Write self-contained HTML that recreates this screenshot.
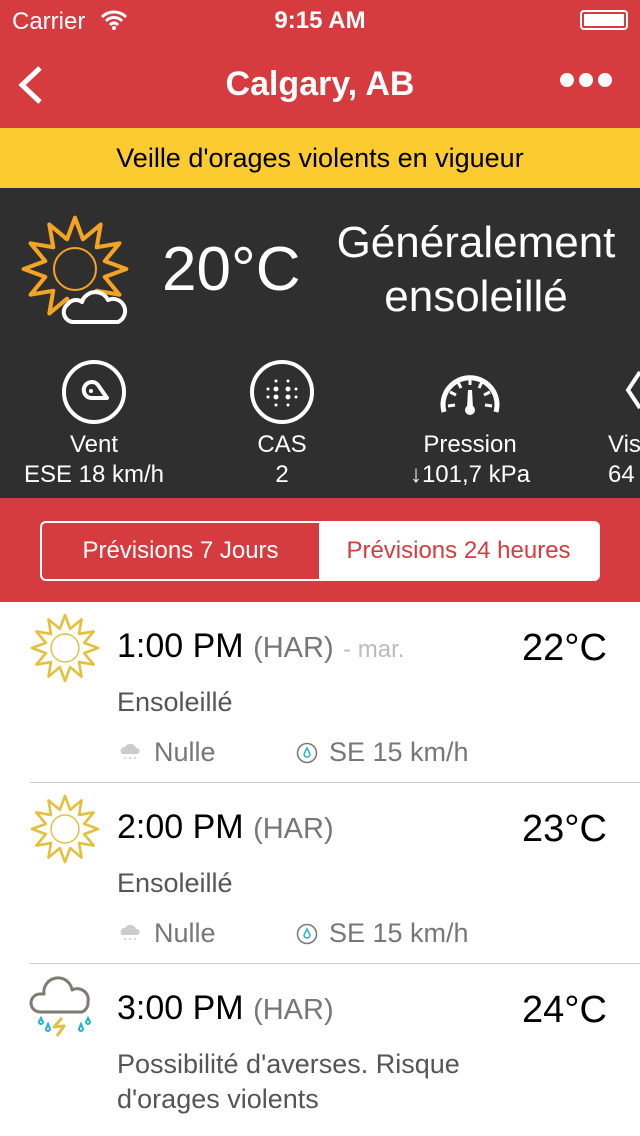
<!DOCTYPE html>
<html><head><meta charset="utf-8"><style>
*{margin:0;padding:0;box-sizing:border-box}
body{width:640px;height:1136px;overflow:hidden;font-family:"Liberation Sans",sans-serif;background:#fff;position:relative}
.a{position:absolute;white-space:nowrap}
</style></head><body>
<svg width="0" height="0" style="position:absolute"><defs>
<symbol id="star" viewBox="-1.15 -1.15 2.3 2.3"><polygon points="0,-1 .155,-.58 .5,-.866 .424,-.424 .866,-.5 .58,-.155 1,0 .58,.155 .866,.5 .424,.424 .5,.866 .155,.58 0,1 -.155,.58 -.5,.866 -.424,.424 -.866,.5 -.58,.155 -1,0 -.58,-.155 -.866,-.5 -.424,-.424 -.5,-.866 -.155,-.58" fill="none" stroke="currentColor" stroke-width=".08" stroke-linejoin="round"/></symbol>
</defs></svg>
<div class="a" style="left:0;top:0;width:640px;height:128px;background:#d63c3f"></div>
<div class="a" style="left:12px;top:8px;color:#fff;font-size:24px">Carrier</div>
<svg class="a" style="left:100px;top:9px" width="28" height="22" viewBox="0 0 28 22"><path d="M2 8a17 17 0 0 1 24 0M6 12a11 11 0 0 1 16 0M10 16a5 5 0 0 1 8 0" stroke="#fff" stroke-width="3" fill="none"/><circle cx="14" cy="19" r="2" fill="#fff"/></svg>
<div class="a" style="left:0;width:640px;top:7px;text-align:center;color:#fff;font-size:24px;font-weight:bold">9:15 AM</div>
<div class="a" style="left:580px;top:10px;width:48px;height:20px;border:2px solid #fff;border-radius:4px;padding:2px"><div style="background:#fff;height:100%;border-radius:1px"></div></div>
<svg class="a" style="left:14px;top:64px" width="30" height="42"><path d="M26 4 L8 21 L26 38" stroke="#fff" stroke-width="5" fill="none"/></svg>
<div class="a" style="left:0;width:640px;top:65px;text-align:center;color:#fff;font-size:34px;font-weight:bold">Calgary, AB</div>
<div class="a" style="left:560px;top:73px"><span style="display:inline-block;width:14px;height:14px;border-radius:7px;background:#fff;margin-right:5px"></span><span style="display:inline-block;width:14px;height:14px;border-radius:7px;background:#fff;margin-right:5px"></span><span style="display:inline-block;width:14px;height:14px;border-radius:7px;background:#fff"></span></div>
<div class="a" style="left:0;top:128px;width:640px;height:60px;background:#fccb2f;text-align:center;font-size:27px;line-height:60px;color:#000">Veille d'orages violents en vigueur</div>
<div class="a" style="left:0;top:188px;width:640px;height:310px;background:#2f2f2f"></div>
<svg class="a" style="left:16px;top:210px;color:#f4a324" width="118" height="118"><use href="#star" width="118" height="118"/><circle cx="59" cy="59" r="21" fill="none" stroke="#f4a324" stroke-width="2"/></svg>
<svg class="a" style="left:60px;top:288px" width="72" height="38"><path d="M12 34 A10 10 0 0 1 8 16 A10 10 0 0 1 22 14 A14 14 0 0 1 48 12 A11 11 0 0 1 58 34 Z" fill="#2f2f2f" stroke="#fff" stroke-width="4" stroke-linejoin="round"/></svg>
<div class="a" style="left:162px;top:234px;color:#fff;font-size:62px;font-weight:300">20°C</div>
<div class="a" style="left:312px;top:216px;width:328px;text-align:center;color:#fff;font-size:44px;line-height:54px">Généralement<br>ensoleillé</div>
<svg class="a" style="left:60px;top:358px" width="68" height="68"><circle cx="34" cy="34" r="30" fill="none" stroke="#fff" stroke-width="4"/><path d="M47 40 L31 40 A8 8 0 1 1 38 27 Z" fill="none" stroke="#fff" stroke-width="4" stroke-linejoin="round"/><circle cx="31" cy="33" r="2" fill="#fff"/></svg>
<svg class="a" style="left:248px;top:358px" width="68" height="68"><circle cx="34" cy="34" r="30" fill="none" stroke="#fff" stroke-width="4"/><g fill="#fff"><circle cx="28" cy="23" r="1.5"/><circle cx="40" cy="23" r="1.5"/><circle cx="20" cy="31" r="1.5"/><circle cx="28" cy="31" r="2.5"/><circle cx="40" cy="31" r="2.5"/><circle cx="48" cy="31" r="1.5"/><circle cx="20" cy="39" r="1.5"/><circle cx="28" cy="39" r="2.5"/><circle cx="40" cy="39" r="2.5"/><circle cx="48" cy="39" r="1.5"/><circle cx="28" cy="47" r="1.5"/><circle cx="40" cy="47" r="1.5"/></g></svg>
<svg class="a" style="left:436px;top:364px" width="68" height="60"><path d="M8 48 A27 27 0 1 1 60 48" fill="none" stroke="#fff" stroke-width="5"/><g stroke="#fff" stroke-width="3"><path d="M34 14v7M22 18l3 6M46 18l-3 6M14 28l6 3M54 28l-6 3M12 42l7-1M56 42l-7-1"/></g><path d="M32 26 L36 26 L37 44 L31 44 Z" fill="#fff"/><circle cx="34" cy="46" r="5" fill="#fff"/></svg>
<svg class="a" style="left:624px;top:370px" width="20" height="40"><path d="M16 2 L4 20 L16 38" stroke="#fff" stroke-width="4" fill="none"/></svg>
<div class="a" style="left:0;width:188px;top:430px;text-align:center;color:#fff;font-size:24px;line-height:30px">Vent<br>ESE 18 km/h</div>
<div class="a" style="left:182px;width:200px;top:430px;text-align:center;color:#fff;font-size:24px;line-height:30px">CAS<br>2</div>
<div class="a" style="left:370px;width:200px;top:430px;text-align:center;color:#fff;font-size:24px;line-height:30px">Pression<br>↓101,7 kPa</div>
<div class="a" style="left:608px;top:430px;color:#fff;font-size:24px;line-height:30px">Vis<br>64</div>
<div class="a" style="left:0;top:498px;width:640px;height:104px;background:#d63c3f"></div>
<div class="a" style="left:40px;top:521px;width:560px;height:60px;border:2px solid #fff;border-radius:6px;background:#fff;overflow:hidden">
<div style="position:absolute;left:0;top:0;width:277px;height:56px;background:#d63c3f;color:#fff;font-size:24px;line-height:56px;text-align:center">Prévisions 7 Jours</div>
<div style="position:absolute;left:277px;top:0;width:279px;height:56px;color:#d63c3f;font-size:24px;line-height:56px;text-align:center">Prévisions 24 heures</div></div>

<svg class="a" style="left:27px;top:610px;color:#e3c13f" width="76" height="76"><use href="#star" width="76" height="76"/><circle cx="38" cy="38" r="14" fill="none" stroke="#e3c13f" stroke-width="1.5"/></svg>
<div class="a" style="left:117px;top:627px;font-size:34px;color:#000">1:00 PM <span style="color:#777;font-size:29px">(HAR)</span> <span style="color:#bbb;font-size:24px">- mar.</span></div>
<div class="a" style="left:522px;top:627px;font-size:38px;color:#000">22°C</div>
<div class="a" style="left:117px;top:687px;font-size:27px;color:#555">Ensoleillé</div>
<svg class="a" style="left:118px;top:742px" width="24" height="20"><path d="M4 12a4 4 0 0 1 3-7a6 6 0 0 1 11 1a3 3 0 0 1 1 6z" fill="#ccc"/><g fill="#ccc"><circle cx="7" cy="16" r="1"/><circle cx="12" cy="16" r="1"/><circle cx="17" cy="16" r="1"/></g></svg>
<div class="a" style="left:154px;top:737px;font-size:27px;color:#777">Nulle</div>
<svg class="a" style="left:295px;top:741px" width="24" height="24"><circle cx="12" cy="12" r="9.5" fill="none" stroke="#777" stroke-width="1.5"/><path d="M12 7 L15 13 A3 3 0 1 1 9 13Z" fill="none" stroke="#1fb4c8" stroke-width="1.5"/></svg>
<div class="a" style="left:329px;top:737px;font-size:27px;color:#777">SE 15 km/h</div>
<div class="a" style="left:30px;top:782px;width:610px;height:1px;background:#ccc"></div>

<svg class="a" style="left:27px;top:791px;color:#e3c13f" width="76" height="76"><use href="#star" width="76" height="76"/><circle cx="38" cy="38" r="14" fill="none" stroke="#e3c13f" stroke-width="1.5"/></svg>
<div class="a" style="left:117px;top:808px;font-size:34px;color:#000">2:00 PM <span style="color:#777;font-size:29px">(HAR)</span></div>
<div class="a" style="left:522px;top:808px;font-size:38px;color:#000">23°C</div>
<div class="a" style="left:117px;top:868px;font-size:27px;color:#555">Ensoleillé</div>
<svg class="a" style="left:118px;top:923px" width="24" height="20"><path d="M4 12a4 4 0 0 1 3-7a6 6 0 0 1 11 1a3 3 0 0 1 1 6z" fill="#ccc"/><g fill="#ccc"><circle cx="7" cy="16" r="1"/><circle cx="12" cy="16" r="1"/><circle cx="17" cy="16" r="1"/></g></svg>
<div class="a" style="left:154px;top:918px;font-size:27px;color:#777">Nulle</div>
<svg class="a" style="left:295px;top:922px" width="24" height="24"><circle cx="12" cy="12" r="9.5" fill="none" stroke="#777" stroke-width="1.5"/><path d="M12 7 L15 13 A3 3 0 1 1 9 13Z" fill="none" stroke="#1fb4c8" stroke-width="1.5"/></svg>
<div class="a" style="left:329px;top:918px;font-size:27px;color:#777">SE 15 km/h</div>
<div class="a" style="left:30px;top:963px;width:610px;height:1px;background:#ccc"></div>

<svg class="a" style="left:28px;top:974px" width="74" height="72"><path d="M12 38 A9 9 0 0 1 12 20 L16 20 A14 14 0 0 1 44 16 A11 11 0 0 1 60 28 A10 10 0 0 1 54 38 Z" fill="none" stroke="#7e7c72" stroke-width="3" stroke-linejoin="round"/><path d="M34 44 L26 53 L36 52 L29 62" fill="none" stroke="#e3c13f" stroke-width="3" stroke-linejoin="round"/><g fill="none" stroke="#1fb4c8" stroke-width="2"><path d="M13 44 l-2 4a2 2 0 0 0 4 0z"/><path d="M20 50 l-2 5a2 2 0 0 0 4 0z"/><path d="M60 44 l-2 4a2 2 0 0 0 4 0z"/><path d="M53 50 l-2 5a2 2 0 0 0 4 0z"/></g></svg>
<div class="a" style="left:117px;top:989px;font-size:34px;color:#000">3:00 PM <span style="color:#777;font-size:29px">(HAR)</span></div>
<div class="a" style="left:522px;top:989px;font-size:38px;color:#000">24°C</div>
<div class="a" style="left:117px;top:1047px;font-size:27px;color:#555;line-height:35px;white-space:normal;width:400px">Possibilité d'averses. Risque d'orages violents</div>
</body></html>
